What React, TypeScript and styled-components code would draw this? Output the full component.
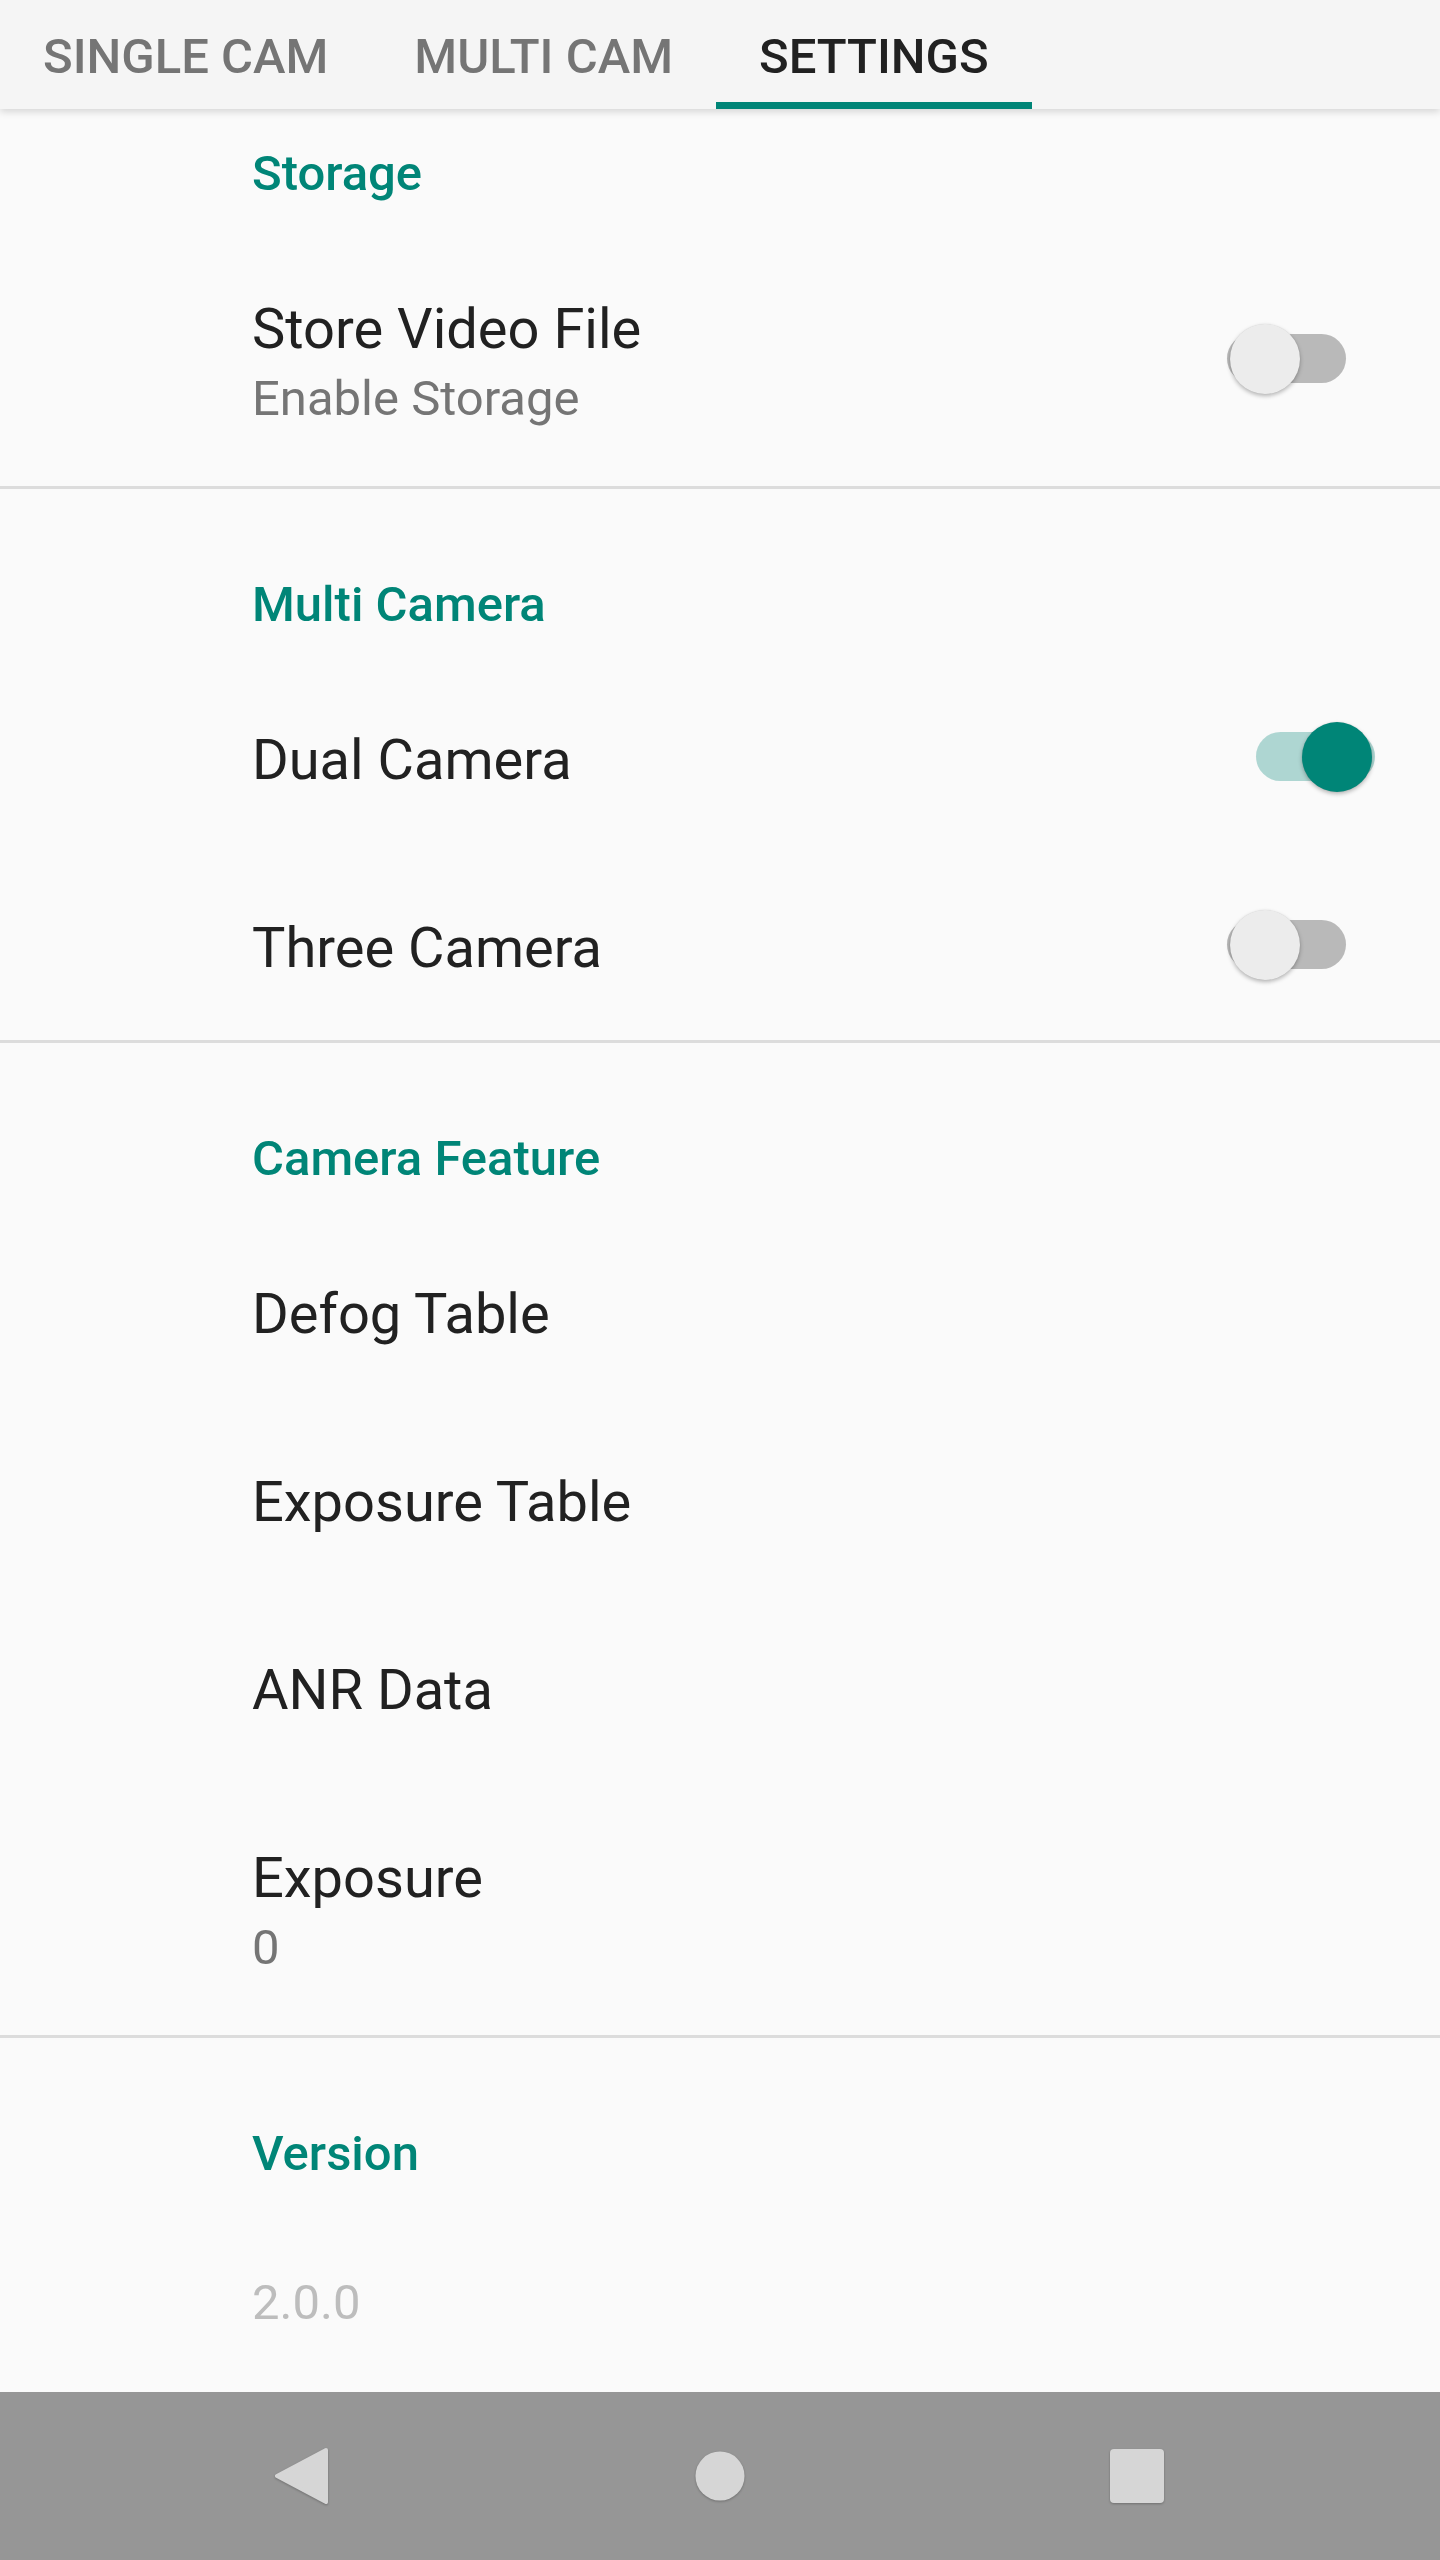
import React from "react";
import styled, { createGlobalStyle } from "styled-components";

const TEAL = "#008577";

const GlobalStyle = createGlobalStyle`
  html, body {
    margin: 0;
    padding: 0;
    background: #fafafa;
  }
  body {
    font-family: Roboto, "Noto Sans", "Liberation Sans", sans-serif;
    -webkit-font-smoothing: antialiased;
  }
  * { box-sizing: border-box; }
`;

const Page = styled.div`
  display: flex;
  flex-direction: column;
  width: 1440px;
  height: 2560px;
  overflow: hidden;
  background: #fafafa;
`;

const TabBar = styled.nav`
  display: flex;
  flex-shrink: 0;
  height: 109px;
  background: #f5f5f5;
  box-shadow: 0 3px 7px rgba(0, 0, 0, 0.14);
  position: relative;
  z-index: 1;
`;

const Tab = styled.div<{ $active?: boolean }>`
  height: 109px;
  padding: 28px 43px 0;
  font-weight: 500;
  font-size: 49px;
  line-height: 57px;
  white-space: nowrap;
  text-transform: uppercase;
  color: ${(p) => (p.$active ? "#212121" : "#757575")};
  border-bottom: 7px solid ${(p) => (p.$active ? TEAL : "transparent")};
`;

const Content = styled.main`
  flex: 1;
  overflow: hidden;
  background: #fafafa;
`;

const Section = styled.section<{ $first?: boolean }>`
  border-top: ${(p) => (p.$first ? "none" : "3px solid #dcdcdc")};
`;

const Header = styled.h2<{ $first?: boolean }>`
  margin: 0;
  padding: ${(p) => (p.$first ? 36 : 87)}px 0 31px 252px;
  font-weight: 500;
  font-size: 49px;
  line-height: 57px;
  color: ${TEAL};
`;

const Row = styled.div<{ $height: number; $right?: number }>`
  display: flex;
  align-items: center;
  height: ${(p) => p.$height}px;
  padding: 0 ${(p) => p.$right ?? 94}px 0 252px;
`;

const TextBlock = styled.div`
  flex: 1;
  display: flex;
  flex-direction: column;
  padding-top: 4px;
`;

const Title = styled.div`
  font-weight: 400;
  font-size: 56px;
  line-height: 66px;
  color: #212121;
`;

const Summary = styled.div<{ $muted?: boolean; $gap?: number }>`
  margin-top: ${(p) => p.$gap ?? 8}px;
  font-weight: 400;
  font-size: 49px;
  line-height: 57px;
  color: ${(p) => (p.$muted ? "#bdbdbd" : "#757575")};
`;

const StaticRow = styled.div`
  padding: 61px 0 0 252px;
`;

const SwitchBox = styled.div`
  position: relative;
  flex-shrink: 0;
  width: 119px;
  height: 70px;
  margin-top: -2px;
`;

const Track = styled.div<{ $on?: boolean }>`
  position: absolute;
  left: 0;
  right: 0;
  top: 10px;
  height: 49px;
  border-radius: 25px;
  background: ${(p) => (p.$on ? "rgba(0, 133, 119, 0.3)" : "#b9b9b9")};
`;

const Thumb = styled.div<{ $on?: boolean }>`
  position: absolute;
  top: 0;
  left: ${(p) => (p.$on ? 46 : 3)}px;
  width: 70px;
  height: 70px;
  border-radius: 50%;
  background: ${(p) => (p.$on ? TEAL : "#ececec")};
  box-shadow: 0 2px 4px rgba(0, 0, 0, 0.28), 0 0 1px rgba(0, 0, 0, 0.12);
`;

const NavBar = styled.footer`
  display: flex;
  flex-shrink: 0;
  align-items: center;
  justify-content: center;
  gap: 337px;
  height: 168px;
  background: #969696;
`;

const NavButton = styled.svg`
  width: 80px;
  height: 80px;
  filter: drop-shadow(0 1px 1px rgba(0, 0, 0, 0.25));
`;

const Switch = ({ on }: { on?: boolean }) => (
  <SwitchBox>
    <Track $on={on} />
    <Thumb $on={on} />
  </SwitchBox>
);

export default function App() {
  return (
    <>
      <GlobalStyle />
      <Page>
        <TabBar>
          <Tab>Single Cam</Tab>
          <Tab>Multi Cam</Tab>
          <Tab $active>Settings</Tab>
        </TabBar>
        <Content>
          <Section $first>
            <Header $first>Storage</Header>
            <Row $height={253}>
              <TextBlock>
                <Title>Store Video File</Title>
                <Summary>Enable Storage</Summary>
              </TextBlock>
              <Switch />
            </Row>
          </Section>
          <Section>
            <Header>Multi Camera</Header>
            <Row $height={188} $right={65}>
              <TextBlock>
                <Title>Dual Camera</Title>
              </TextBlock>
              <Switch on />
            </Row>
            <Row $height={188}>
              <TextBlock>
                <Title>Three Camera</Title>
              </TextBlock>
              <Switch />
            </Row>
          </Section>
          <Section>
            <Header>Camera Feature</Header>
            <Row $height={188}>
              <TextBlock>
                <Title>Defog Table</Title>
              </TextBlock>
            </Row>
            <Row $height={188}>
              <TextBlock>
                <Title>Exposure Table</Title>
              </TextBlock>
            </Row>
            <Row $height={188}>
              <TextBlock>
                <Title>ANR Data</Title>
              </TextBlock>
            </Row>
            <Row $height={253}>
              <TextBlock>
                <Title>Exposure</Title>
                <Summary>0</Summary>
              </TextBlock>
            </Row>
          </Section>
          <Section>
            <Header>Version</Header>
            <StaticRow>
              <Summary $muted $gap={0}>2.0.0</Summary>
            </StaticRow>
          </Section>
        </Content>
        <NavBar>
          <NavButton viewBox="0 0 80 80">
            <path
              d="M63 14 L14 40 L63 66 Z"
              fill="#d6d6d6"
              stroke="#d6d6d6"
              strokeWidth="4"
              strokeLinejoin="round"
            />
          </NavButton>
          <NavButton viewBox="0 0 80 80">
            <circle cx="40" cy="40" r="24.5" fill="#d6d6d6" />
          </NavButton>
          <NavButton viewBox="0 0 80 80">
            <rect x="13" y="13" width="54" height="54" rx="4" fill="#d6d6d6" />
          </NavButton>
        </NavBar>
      </Page>
    </>
  );
}
